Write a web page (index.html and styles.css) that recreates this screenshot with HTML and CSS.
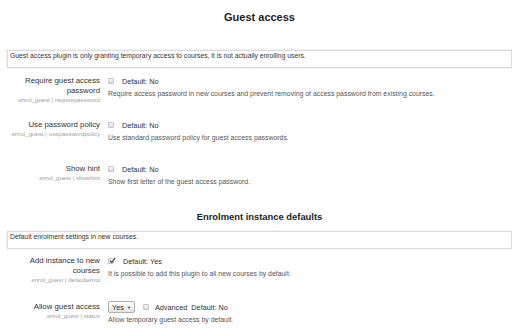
FILE: index.html
```html
<!DOCTYPE html>
<html lang="en">
<head>
    <meta charset="UTF-8">
    <title>Guest access</title>
    <link rel="stylesheet" href="styles.css">
</head>
<body>
    <div class="page">
        <h2 class="section-title">Guest access</h2>
        <div class="info-box">Guest access plugin is only granting temporary access to courses, it is not actually enrolling users.</div>

        <div class="settings">
            <div class="setting">
                <div class="setting-label">
                    <label>Require guest access password</label>
                    <span class="setting-key">enrol_guest | requirepassword</span>
                </div>
                <div class="setting-body">
                    <div class="control-line">
                        <span class="cb"></span>
                        <span class="default">Default: No</span>
                    </div>
                    <div class="setting-desc">Require access password in new courses and prevent removing of access password from existing courses.</div>
                </div>
            </div>

            <div class="setting">
                <div class="setting-label">
                    <label>Use password policy</label>
                    <span class="setting-key">enrol_guest | usepasswordpolicy</span>
                </div>
                <div class="setting-body">
                    <div class="control-line">
                        <span class="cb"></span>
                        <span class="default">Default: No</span>
                    </div>
                    <div class="setting-desc">Use standard password policy for guest access passwords.</div>
                </div>
            </div>

            <div class="setting">
                <div class="setting-label">
                    <label>Show hint</label>
                    <span class="setting-key">enrol_guest | showhint</span>
                </div>
                <div class="setting-body">
                    <div class="control-line">
                        <span class="cb"></span>
                        <span class="default">Default: No</span>
                    </div>
                    <div class="setting-desc">Show first letter of the guest access password.</div>
                </div>
            </div>
        </div>

        <h3 class="section-title second">Enrolment instance defaults</h3>
        <div class="info-box">Default enrolment settings in new courses.</div>

        <div class="settings tight">
            <div class="setting tall">
                <div class="setting-label">
                    <label>Add instance to new courses</label>
                    <span class="setting-key">enrol_guest | defaultenrol</span>
                </div>
                <div class="setting-body">
                    <div class="control-line">
                        <span class="cb checked">
                            <svg viewBox="0 0 8 8" width="7" height="7"><path d="M1.2 4.2 L3.2 6.3 L7.2 0.8" fill="none" stroke="#333" stroke-width="1.2"/></svg>
                        </span>
                        <span class="default">Default: Yes</span>
                    </div>
                    <div class="setting-desc">It is possible to add this plugin to all new courses by default.</div>
                </div>
            </div>

            <div class="setting">
                <div class="setting-label">
                    <label>Allow guest access</label>
                    <span class="setting-key">enrol_guest | status</span>
                </div>
                <div class="setting-body">
                    <div class="control-line">
                        <span class="select">Yes <span class="caret">▼</span></span>
                        <span class="cb"></span>
                        <span class="advanced">Advanced</span>
                        <span class="default">Default: No</span>
                    </div>
                    <div class="setting-desc">Allow temporary guest access by default.</div>
                </div>
            </div>
        </div>
    </div>
</body>
</html>
```

FILE: styles.css
```css
body {
    margin: 0;
    background: #fff;
    font-family: "Liberation Sans", Arial, sans-serif;
    color: #333;
}

.page {
    padding-left: 7px;
    width: 505px;
}

.section-title {
    margin: 11px 0 27px 0;
    font-size: 11px;
    line-height: 12px;
    font-weight: bold;
    text-align: center;
    color: #222;
}

.section-title.second {
    margin: 3px 0 8px 0;
    font-size: 9.4px;
}

.info-box {
    border: 1px solid #dcdcdc;
    box-shadow: 0 0 0 1px #f3f3f3;
    padding: 0 2px 6px 2px;
    height: 10px;
    font-size: 6.8px;
    line-height: 10px;
    color: #333;
}

.settings {
    padding-top: 8px;
}

.settings.tight {
    padding-top: 7px;
}

.setting {
    display: flex;
    gap: 8px;
    min-height: 44px;
}

.setting.tall {
    min-height: 46px;
}

.setting-label {
    width: 93px;
    text-align: right;
    flex-shrink: 0;
}

.setting-label label {
    display: block;
    font-size: 7.8px;
    line-height: 10px;
    color: #333;
}

.setting-key {
    display: block;
    font-size: 6.1px;
    line-height: 7px;
    color: #a0a0a0;
}

.setting-body {
    flex: 1;
}

.control-line {
    display: flex;
    align-items: center;
    height: 10px;
    font-size: 7.3px;
    color: #333;
}

.cb {
    width: 4px;
    height: 4px;
    border: 1px solid #c4c4c4;
    border-radius: 1px;
    background: linear-gradient(#fafafa, #d8d8d8);
    margin-right: 8px;
    position: relative;
}

.cb.checked {
    margin-right: 9px;
}

.cb.checked svg {
    position: absolute;
    left: 0;
    top: -2px;
}

.select {
    display: flex;
    align-items: center;
    gap: 3px;
    height: 10px;
    padding: 0 3px;
    border: 1px solid #b0b0b0;
    border-radius: 2px;
    background: linear-gradient(#fff, #e4e4e4);
    font-size: 7.3px;
    margin-right: 8px;
}

.caret {
    font-size: 4px;
}

.advanced {
    margin-right: 4px;
    margin-left: -2px;
}

.setting-desc {
    margin-top: 3px;
    font-size: 6.9px;
    line-height: 10px;
    color: #555;
}
```
